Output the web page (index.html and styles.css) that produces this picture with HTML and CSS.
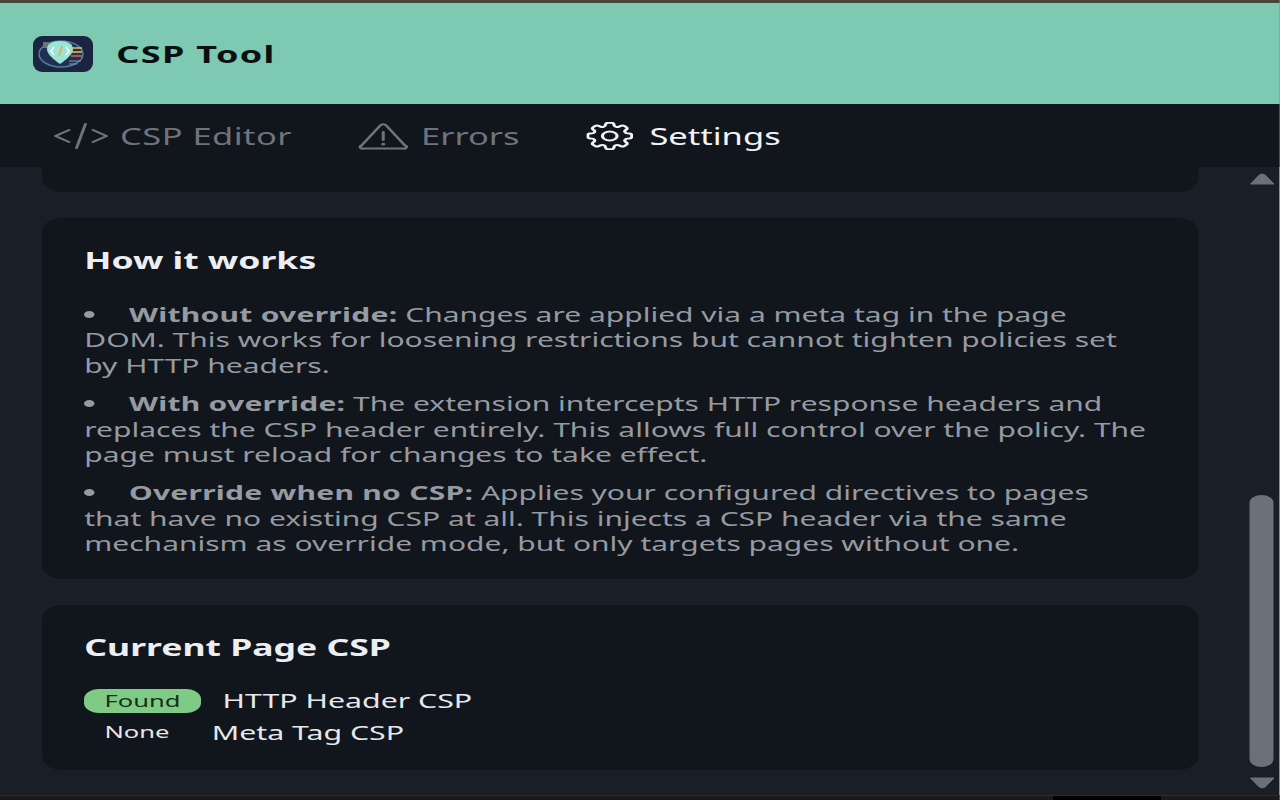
FILE: index.html
```html
<!DOCTYPE html>
<html lang="en">
<head>
    <meta charset="UTF-8">
    <title>CSP Tool</title>
    <link rel="stylesheet" href="styles.css">
</head>
<body>
    <div class="app">
        <div class="top-strip"></div>
        <header class="header">
            <svg class="logo" width="40" height="36" viewBox="0 0 60 36" preserveAspectRatio="none">
                <rect width="60" height="36" rx="9" fill="#1b2440"/>
                <ellipse cx="28" cy="18" rx="22" ry="13" fill="#232f52" stroke="#4f7f9c" stroke-width="1.5"/>
                <path d="M10 6h20v6H10z" fill="#6b7280"/>
                <path d="M27 5c8 0 13 3 13 8 0 5-6 10-13 15-7-5-13-10-13-15 0-5 5-8 13-8z" fill="#9ae6d5"/>
                <path d="M21 11l-3 4 3 4M33 11l3 4-3 4" fill="none" stroke="#fff" stroke-width="1.5"/>
                <path d="M29 10l-3 10" stroke="#f0a63c" stroke-width="1.5"/>
                <path d="M38 12h11M38 16h11" stroke="#f0c14b" stroke-width="1.5"/>
                <path d="M38 20h11" stroke="#e0644a" stroke-width="1.5"/>
                <path d="M36 25h12M36 28h8" stroke="#8b93a3" stroke-width="1"/>
            </svg>
            <h1 class="title">CSP Tool</h1>
        </header>
        <nav class="tabs">
            <div class="tab">
                <svg width="36" height="26" viewBox="0 0 36 26" fill="none" stroke="currentColor" stroke-width="2" stroke-linecap="round">
                    <path d="M10 7 1 13l9 6M26 7l9 6-9 6M21 1l-6 24"/>
                </svg>
                <span class="tab-wide">CSP Editor</span>
            </div>
            <div class="tab">
                <svg width="33" height="28" viewBox="0 0 33 28" fill="none" stroke="currentColor" stroke-width="2" stroke-linejoin="round" stroke-linecap="round">
                    <path d="M14.500 3.500a2.300 2.300 0 0 1 4 0l12.500 20a1.500 1.500 0 0 1-1.300 3H3.300a1.500 1.500 0 0 1-1.300-3z"/>
                    <path d="M16.500 10v8"/>
                    <path d="M16.500 22v.2" stroke-width="2.600"/>
                </svg>
                <span>Errors</span>
            </div>
            <div class="tab active">
                <svg width="31" height="28" viewBox="2.500 2.500 19 19" preserveAspectRatio="none" fill="none" stroke="currentColor" stroke-width="1.300" stroke-linejoin="round">
                    <path d="M10.343 3.940c.09-.542.56-.94 1.110-.94h1.093c.55 0 1.020.398 1.110.94l.149.894c.07.424.384.764.78.93.398.164.855.142 1.205-.108l.737-.527a1.125 1.125 0 0 1 1.450.12l.773.774c.39.389.44 1.002.12 1.450l-.527.737c-.25.35-.272.806-.107 1.204.165.397.505.71.93.78l.893.15c.543.09.94.559.94 1.109v1.094c0 .55-.397 1.020-.94 1.110l-.894.149c-.424.07-.764.383-.929.78-.165.398-.143.854.107 1.204l.527.738c.32.447.269 1.060-.12 1.450l-.774.773a1.125 1.125 0 0 1-1.449.12l-.738-.527c-.35-.25-.806-.272-1.203-.107-.398.165-.71.505-.781.929l-.149.894c-.09.542-.56.94-1.110.94h-1.094c-.55 0-1.019-.398-1.110-.94l-.148-.894c-.071-.424-.384-.764-.781-.93-.398-.164-.854-.142-1.204.108l-.738.527c-.447.32-1.060.269-1.450-.12l-.773-.774a1.125 1.125 0 0 1-.12-1.450l.527-.737c.25-.35.272-.806.108-1.204-.165-.397-.506-.71-.93-.78l-.894-.15c-.542-.09-.94-.56-.94-1.109v-1.094c0-.55.398-1.020.94-1.110l.894-.149c.424-.07.765-.383.93-.78.165-.398.143-.854-.108-1.204l-.526-.738a1.125 1.125 0 0 1 .12-1.450l.773-.773a1.125 1.125 0 0 1 1.450-.12l.737.527c.35.25.807.272 1.204.107.397-.165.71-.505.78-.929l.15-.894z"/>
                    <circle cx="12" cy="12" r="3"/>
                </svg>
                <span>Settings</span>
            </div>
        </nav>
        <div class="body-row">
            <main class="content">
                <div class="card card-cut"></div>
                <section class="card card-how">
                    <h2>How it works</h2>
                    <ul class="notes">
                        <li><b>Without override:</b> Changes are applied via a meta tag in the page DOM. This works for loosening restrictions but cannot tighten policies set by HTTP headers.</li>
                        <li><b>With override:</b> The extension intercepts HTTP response headers and replaces the CSP header entirely. This allows full control over the policy. The page must reload for changes to take effect.</li>
                        <li><b>Override when no CSP:</b> Applies your configured directives to pages that have no existing CSP at all. This injects a CSP header via the same mechanism as override mode, but only targets pages without one.</li>
                    </ul>
                </section>
                <section class="card card-current">
                    <h2>Current Page CSP</h2>
                    <div class="status-row first">
                        <span class="badge found">Found</span>
                        <span>HTTP Header CSP</span>
                    </div>
                    <div class="status-row">
                        <span class="badge">None</span>
                        <span>Meta Tag CSP</span>
                    </div>
                </section>
            </main>
            <div class="scrollbar">
                <svg class="arrow-up" width="17" height="12" viewBox="0 0 26 12" preserveAspectRatio="none"><path d="M1 11 10 2q3-2 6 0l9 9z" fill="#6b7079" stroke="#6b7079" stroke-linejoin="round"/></svg>
                <div class="thumb"></div>
                <svg class="arrow-down" width="17" height="12" viewBox="0 0 26 12" preserveAspectRatio="none"><path d="M1 1h24l-9 9q-3 2-6 0z" fill="#6b7079" stroke="#6b7079" stroke-linejoin="round"/></svg>
            </div>
        </div>
        <div class="bottom-strip"><div class="strip-dark"></div></div>
    </div>
</body>
</html>
```
FILE: styles.css
```css
html, body {
    margin: 0;
    height: 800px;
    overflow: hidden;
}

/* the whole popup is drawn wider than it is tall, so stretch it on x */
.app {
    width: 853.33px;
    height: 800px;
    display: flex;
    flex-direction: column;
    transform: scaleX(1.5);
    transform-origin: 0 0;
    background-color: #1a1e26;
    font-family: "Noto Sans", "Open Sans", sans-serif;
}

.top-strip {
    height: 3px;
    flex-shrink: 0;
    background-color: #4a4538;
}

.header {
    height: 101px;
    flex-shrink: 0;
    display: flex;
    align-items: center;
    gap: 15.500px;
    padding-left: 22px;
    background-color: #7dc9b2;
}

.title {
    margin: 0;
    font-size: 24px;
    font-weight: 700;
    letter-spacing: 0.9px;
    color: #0b0f12;
}

.tabs {
    height: 63px;
    flex-shrink: 0;
    display: flex;
    align-items: center;
    gap: 44.500px;
    padding-left: 35.500px;
    background-color: #11151c;
}

.tab {
    display: flex;
    align-items: center;
    gap: 8.500px;
    font-size: 23px;
    color: #6f747c;
}

.tab-wide {
    letter-spacing: 0.3px;
}

.tab.active {
    gap: 11px;
    color: #f1f3f5;
}

.body-row {
    flex: 1;
    min-height: 0;
    display: flex;
}

.content {
    width: 771px;
    margin-left: 27.670px;
}

.card {
    background-color: #11151c;
    border-radius: 14px;
    margin-bottom: 26px;
    box-sizing: border-box;
    padding: 0 33px 0 28.500px;
}

.card-cut {
    height: 25px;
    border-radius: 0 0 14px 14px;
}

.card-how {
    height: 361px;
    padding-top: 27px;
}

.card-current {
    height: 165px;
    padding-top: 27px;
}

.card h2 {
    margin: 0;
    font-size: 23.700px;
    line-height: 30px;
    font-weight: 700;
    color: #eceef1;
}

.notes {
    list-style: none;
    margin: 27px 0 0;
    padding: 0;
    font-size: 20px;
    line-height: 25.400px;
    color: #969aa1;
}

.notes b {
    letter-spacing: 0.180px;
}

.notes li {
    margin-bottom: 13px;
}

.notes li::before {
    content: "";
    display: inline-block;
    width: 7px;
    height: 7px;
    margin-right: 22.800px;
    border-radius: 50%;
    background-color: #969aa1;
    vertical-align: 4px;
}

.status-row {
    display: flex;
    align-items: center;
    gap: 14.670px;
    font-size: 20.200px;
    line-height: 31.500px;
    color: #e6e8ec;
}

.status-row.first {
    margin-top: 23px;
}

.badge {
    height: 24px;
    line-height: 24px;
    padding: 0 13.500px;
    border-radius: 10px;
    font-size: 17px;
}

.badge.found {
    background-color: #7fcb85;
    color: #14301c;
}

.scrollbar {
    width: 16px;
    margin-left: 34.670px;
    display: flex;
    flex-direction: column;
    align-items: center;
}

.arrow-up {
    margin-top: 6px;
}

.thumb {
    width: 16px;
    height: 272px;
    margin-top: 310px;
    border-radius: 8px;
    background-color: #6b7079;
}

.arrow-down {
    margin-top: 10px;
}

.bottom-strip {
    height: 5px;
    flex-shrink: 0;
    padding-left: 702px;
    background-color: #1a191c;
    border-top: 1px solid #2b2a2d;
    box-sizing: border-box;
}

.strip-dark {
    width: 72px;
    height: 4px;
    background-color: #000;
}
```
